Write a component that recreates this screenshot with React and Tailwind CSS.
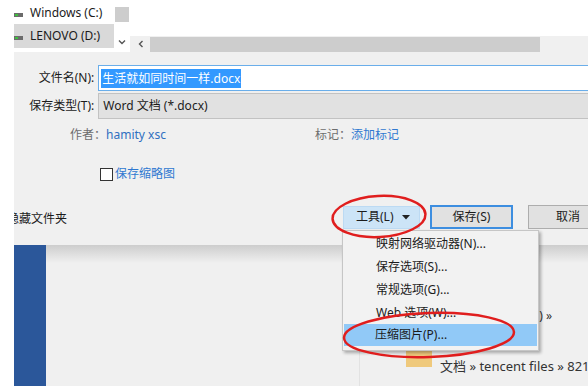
import React from "react";

function Drive() {
  return (
    <div className="w-[9px] h-[4px] bg-[#6b6b6b] flex items-center pl-[1px] mt-[4px]">
      <div className="w-[3px] h-[2px] bg-[#3fbf3f]" />
    </div>
  );
}

export default function App() {
  return (
    <div className="w-[588px] h-[386px] overflow-hidden relative flex bg-white text-[12px] text-[#1b1b1b] font-['Noto_Sans','Noto_Sans_CJK_SC',sans-serif]">
      <div className="w-[14px] shrink-0 bg-white" />
      <div className="w-[574px] shrink-0 flex flex-col overflow-hidden">
        {/* top nav + scrollbars */}
        <div className="h-[52px] flex shrink-0">
          <div className="w-[100px] flex flex-col pt-[3px] bg-white">
            <div className="h-[20px] flex items-center gap-[7px] whitespace-nowrap">
              <Drive />
              <span>Windows (C:)</span>
            </div>
            <div className="mt-[1px] h-[24px] bg-[#d9d9d9] flex items-center gap-[7px] whitespace-nowrap">
              <Drive />
              <span>LENOVO (D:)</span>
            </div>
          </div>
          <div className="w-[16px] flex flex-col items-center bg-white">
            <div className="mt-[7px] w-[14px] h-[15px] bg-[#cdcdcd]" />
            <svg className="mt-[17px]" width="8" height="6" viewBox="0 0 8 6">
              <path d="M1 1.5 L4 4.5 L7 1.5" stroke="#555" strokeWidth="1.4" fill="none" />
            </svg>
          </div>
          <div className="flex-1 flex flex-col">
            <div className="h-[36px] bg-white" />
            <div className="h-[16px] bg-[#f0f0f0] flex items-center">
              <svg className="ml-[8px]" width="6" height="8" viewBox="0 0 6 8">
                <path d="M4.5 1 L1.5 4 L4.5 7" stroke="#555" strokeWidth="1.4" fill="none" />
              </svg>
              <div className="ml-[6px] w-[390px] h-[15px] bg-[#cdcdcd]" />
            </div>
          </div>
        </div>

        {/* dialog body */}
        <div className="h-[193px] shrink-0 bg-[#f0f0f0] flex flex-col pt-[13px]">
          <div className="h-[26px] flex items-center">
            <div className="w-[82px] text-right">文件名(N):</div>
            <div className="ml-[4px] w-[500px] h-[26px] border-y border-l border-[#6aaeea] bg-white flex items-center pl-[2px]">
              <span className="bg-[#3399ff] text-white px-[1px] leading-[19px] whitespace-nowrap">生活就如同时间一样.docx</span>
            </div>
          </div>
          <div className="mt-[2px] h-[26px] flex items-center">
            <div className="w-[82px] text-right">保存类型(T):</div>
            <div className="ml-[4px] w-[500px] h-[26px] border-y border-l border-[#c2c2c2] bg-[#e1e1e1] flex items-center pl-[4px] whitespace-nowrap">
              Word 文档 (*.docx)
            </div>
          </div>
          <div className="mt-[7px] h-[18px] flex items-center whitespace-nowrap">
            <div className="w-[301px] pl-[56px] flex items-center">
              <span className="text-[#6d6d6d]">作者：</span>
              <span className="text-[#2f6fc0]">hamity xsc</span>
            </div>
            <span className="text-[#6d6d6d]">标记：</span>
            <span className="text-[#2f78d0]">添加标记</span>
          </div>
          <div className="mt-[22px] h-[16px] flex items-center pl-[86px]">
            <div className="w-[13px] h-[13px] border border-[#333] bg-white" />
            <span className="ml-[2px] text-[#2f78d0]">保存缩略图</span>
          </div>
          <div className="mt-[23px] h-[24px] flex items-center">
            <div className="w-[329px] shrink-0 whitespace-nowrap pt-[4px]">
              <span className="-ml-[7px]">隐藏文件夹</span>
            </div>
            <div className="w-[77px] h-[23px] shrink-0 bg-[#cce4f7] border border-[#bcdaf3] flex items-center justify-between pl-[12px] pr-[9px] whitespace-nowrap">
              <span>工具(L)</span>
              <svg width="8" height="5" viewBox="0 0 8 5">
                <path d="M0 0 L8 0 L4 4.5 Z" fill="#222" />
              </svg>
            </div>
            <div className="ml-[10px] w-[83px] h-[24px] shrink-0 bg-[#e1e1e1] border-2 border-[#3d8ee0] flex items-center justify-center whitespace-nowrap">
              保存(S)
            </div>
            <div className="ml-[15px] w-[80px] h-[24px] shrink-0 bg-[#e1e1e1] border border-[#adadad] flex items-center justify-center whitespace-nowrap">
              取消
            </div>
          </div>
        </div>

        {/* backstage */}
        <div className="flex-1 flex">
          <div className="w-[32px] bg-[#2b579a] shrink-0" />
          <div className="flex-1 flex flex-col bg-[#f0f0f0] relative">
            <div className="h-[18px] bg-gradient-to-b from-[#cdcdcd] to-[#f0f0f0] shrink-0" />
            <div className="flex-1 flex">
              <div className="w-[314px] shrink-0 border-r border-[#e2e2e2]" />
              <div className="flex-1 flex flex-col pt-[44px]">
                <div className="w-[192px] h-[18px] text-right whitespace-nowrap text-[#333]">LENOVO (D:) »</div>
                <div className="mt-[25px] flex items-start whitespace-nowrap">
                  <div className="ml-[46px] w-[26px] h-[17px] bg-[#efc97c] shrink-0" />
                  <span className="ml-[8px] mt-[7px] leading-[18px] text-[13px] text-[#333]">文档 » tencent files » 8218</span>
                </div>
              </div>
            </div>
          </div>
        </div>
      </div>

      {/* dropdown menu */}
      <div className="absolute left-[342px] top-[230px] w-[197px] h-[121px] bg-[#f2f2f2] border border-[#c6c6c6] shadow-[2px_2px_3px_rgba(0,0,0,0.3)] p-[1px] flex flex-col">
        <div className="h-[23px] flex items-center pl-[32px] whitespace-nowrap">映射网络驱动器(N)...</div>
        <div className="h-[23px] flex items-center pl-[32px] whitespace-nowrap">保存选项(S)...</div>
        <div className="h-[23px] flex items-center pl-[32px] whitespace-nowrap">常规选项(G)...</div>
        <div className="h-[23px] flex items-center pl-[32px] whitespace-nowrap">Web 选项(W)...</div>
        <div className="h-[22px] flex items-center pl-[31px] bg-[#91c9f7] whitespace-nowrap">压缩图片(P)...</div>
      </div>

      {/* red annotations */}
      <svg className="absolute left-0 top-0 pointer-events-none" width="588" height="386" viewBox="0 0 588 386">
        <ellipse cx="379" cy="216.5" rx="46.5" ry="20.5" fill="none" stroke="#e01e1e" strokeWidth="2.5" transform="rotate(-3 379 216.5)" />
        <ellipse cx="429" cy="335" rx="85" ry="22" fill="none" stroke="#e01e1e" strokeWidth="2.5" transform="rotate(-2 429 335)" />
      </svg>
    </div>
  );
}
